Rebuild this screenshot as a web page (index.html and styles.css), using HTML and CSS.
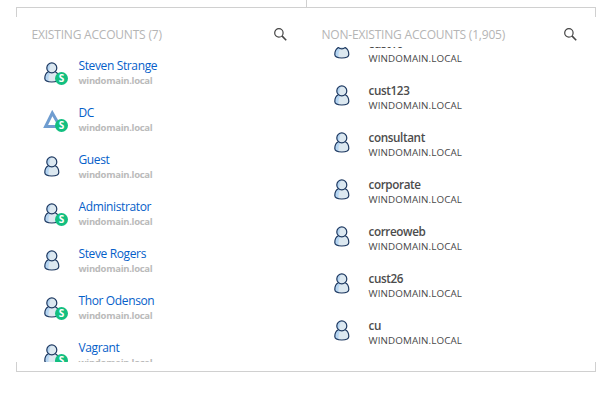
FILE: index.html
```html
<!DOCTYPE html>
<html lang="en">
<head>
<meta charset="utf-8">
<title>Accounts</title>
<link rel="stylesheet" href="styles.css">
</head>
<body>
<svg class="defs" width="0" height="0" aria-hidden="true">
  <defs>
    <symbol id="user" viewBox="0 0 16 21">
      <path d="M4.400 9.700C1.900 10.700.800 14.200.800 16.600c0 2.500 3 3.400 7 3.400s7-.9 7-3.400c0-2.400-1.100-5.900-3.600-6.900Z" fill="#dce8f0"/>
      <path d="M4.400 9.700C1.900 10.700.800 14.200.800 16.600c0 1.800 1.500 2.700 4 3.100-.7-3.700-.1-7.500 1.700-9Z" fill="#b5d5f2"/>
      <path d="M4.400 9.700C1.900 10.700.800 14.200.800 16.600c0 2.500 3 3.400 7 3.400s7-.9 7-3.400c0-2.400-1.100-5.900-3.600-6.900" fill="none" stroke="#1d3860" stroke-width="1.200"/>
      <circle cx="7.800" cy="5.900" r="5" fill="#dce8f0"/>
      <path d="M7.400 1A5 5 0 0 0 4.700 9.900C5.600 8 5.500 3 7.400 1Z" fill="#b5d5f2"/>
      <circle cx="7.800" cy="5.900" r="5" fill="none" stroke="#1d3860" stroke-width="1.200"/>
    </symbol>
    <symbol id="domain" viewBox="0 0 20 19">
      <path d="M9.300 3 2.600 16.500H17Z" fill="none" stroke="#6f9dd0" stroke-width="3"/>
    </symbol>
    <symbol id="search" viewBox="0 0 13 13">
      <circle cx="4.900" cy="4.900" r="4.200" fill="none" stroke="#444" stroke-width="1.200"/>
      <path d="m7.900 7.900 4.300 4.300" stroke="#444" stroke-width="1.600"/>
    </symbol>
  </defs>
</svg>
<div class="connector"></div>
<main class="panel">
  <section class="column existing">
    <header class="head"><h2>EXISTING ACCOUNTS (7)</h2><svg class="search"><use href="#search"/></svg></header>
    <ul class="list">
      <li><span class="icon"><svg class="user"><use href="#user"/></svg><b class="badge">S</b></span><div><a>Steven Strange</a><small>windomain.local</small></div></li>
      <li><span class="icon"><svg class="domain"><use href="#domain"/></svg><b class="badge">S</b></span><div><a>DC</a><small>windomain.local</small></div></li>
      <li><span class="icon"><svg class="user"><use href="#user"/></svg></span><div><a>Guest</a><small>windomain.local</small></div></li>
      <li><span class="icon"><svg class="user"><use href="#user"/></svg><b class="badge">S</b></span><div><a>Administrator</a><small>windomain.local</small></div></li>
      <li><span class="icon"><svg class="user"><use href="#user"/></svg></span><div><a>Steve Rogers</a><small>windomain.local</small></div></li>
      <li><span class="icon"><svg class="user"><use href="#user"/></svg><b class="badge">S</b></span><div><a>Thor Odenson</a><small>windomain.local</small></div></li>
      <li><span class="icon"><svg class="user"><use href="#user"/></svg><b class="badge">S</b></span><div><a>Vagrant</a><small>windomain.local</small></div></li>
    </ul>
  </section>
  <section class="column missing">
    <header class="head"><h2>NON-EXISTING ACCOUNTS (1,905)</h2><svg class="search"><use href="#search"/></svg></header>
    <ul class="list">
      <li><span class="icon"><svg class="user"><use href="#user"/></svg></span><div><a>cust10</a><small>WINDOMAIN.LOCAL</small></div></li>
      <li><span class="icon"><svg class="user"><use href="#user"/></svg></span><div><a>cust123</a><small>WINDOMAIN.LOCAL</small></div></li>
      <li><span class="icon"><svg class="user"><use href="#user"/></svg></span><div><a>consultant</a><small>WINDOMAIN.LOCAL</small></div></li>
      <li><span class="icon"><svg class="user"><use href="#user"/></svg></span><div><a>corporate</a><small>WINDOMAIN.LOCAL</small></div></li>
      <li><span class="icon"><svg class="user"><use href="#user"/></svg></span><div><a>correoweb</a><small>WINDOMAIN.LOCAL</small></div></li>
      <li><span class="icon"><svg class="user"><use href="#user"/></svg></span><div><a>cust26</a><small>WINDOMAIN.LOCAL</small></div></li>
      <li><span class="icon"><svg class="user"><use href="#user"/></svg></span><div><a>cu</a><small>WINDOMAIN.LOCAL</small></div></li>
    </ul>
  </section>
</main>
</body>
</html>
```
FILE: styles.css
```css
* { box-sizing: border-box; }
body { margin: 0; background: #fff; font-family: "Open Sans", "Noto Sans", sans-serif; overflow: hidden; }
.defs { display: block; }
.connector { width: 1px; height: 7px; margin-left: 306px; background: #d0d0d0; }
.panel {
  display: grid;
  grid-template-columns: 290px 290px;
  width: 580px;
  height: 365px;
  margin-left: 16px;
  border-top: 1px solid #d0d0d0;
  border-bottom: 1px solid #d0d0d0;
  background:
    linear-gradient(#d0d0d0, #d0d0d0) left top / 1px 9px no-repeat,
    linear-gradient(#d0d0d0, #d0d0d0) right top / 1px 9px no-repeat,
    linear-gradient(#d0d0d0, #d0d0d0) left bottom / 1px 9px no-repeat,
    linear-gradient(#d0d0d0, #d0d0d0) right bottom / 1px 9px no-repeat;
}
.head { display: flex; justify-content: space-between; height: 39px; padding: 20px 19px 0 15.5px; }
h2 { margin: 0; font-size: 12px; line-height: 14px; font-weight: 400; color: #b5b5b5; white-space: nowrap; letter-spacing: -0.2px; }
.search { width: 13px; height: 13px; }
.list { list-style: none; margin: 0; padding: 0; height: 315px; overflow: hidden; }
li { display: flex; height: 47px; padding-left: 27px; }
.icon { position: relative; flex: none; width: 35.5px; padding-top: 15px; }
.user { display: block; width: 16px; height: 21px; margin-left: 0.5px; }
.domain { display: block; width: 20px; height: 19px; margin-top: 1px; }
.badge {
  position: absolute; left: 12px; top: 25px; width: 13px; height: 13px; border-radius: 50%;
  background: #12bf80; color: #fff; font-size: 10px; line-height: 13px; font-weight: 700; text-align: center;
}
a, small { display: block; white-space: nowrap; }
a { margin-top: 11px; font-size: 12px; line-height: 16px; color: #0560c9; letter-spacing: -0.37px; }
small { font-size: 9.5px; line-height: 14px; font-weight: 700; color: #bababa; letter-spacing: -0.3px; }
.missing li:first-child { margin-top: -22px; }
.missing .icon { padding-top: 13px; }
.missing a { margin: 10px 0 1px; color: #4c4c4c; font-size: 11.7px; font-weight: 600; letter-spacing: -0.38px; }
.missing small { color: #484848; font-size: 9.8px; line-height: 13px; font-weight: 400; letter-spacing: 0.12px; }
```
